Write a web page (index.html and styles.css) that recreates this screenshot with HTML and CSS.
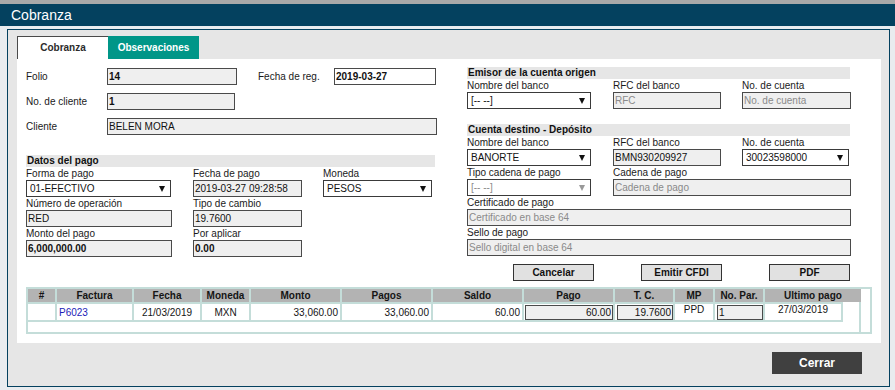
FILE: index.html
```html
<!DOCTYPE html>
<html lang="es">
  <head>
    <meta charset="UTF-8" />
    <meta name="viewport" content="width=device-width, initial-scale=1.0" />
    <title>Cobranza</title>
    <link rel="stylesheet" href="styles.css">
  </head>
  <body>
    <header class="topbar"><h1>Cobranza</h1></header>

    <div class="panel">
      <nav class="tabs">
        <span class="tab tab-on">Cobranza</span>
        <span class="tab tab-off">Observaciones</span>
      </nav>

      <section class="sheet">
        <div class="cols">
          <div class="col-left">
            <div class="row">
              <label class="row-lbl">Folio</label>
              <input class="inp w130 strong" value="14" readonly />
              <label class="reg-lbl">Fecha de reg.</label>
              <input class="inp inp-white w102 strong" value="2019-03-27" />
            </div>
            <div class="row">
              <label class="row-lbl">No. de cliente</label>
              <input class="inp w128 strong" value="1" readonly />
            </div>
            <div class="row">
              <label class="row-lbl">Cliente</label>
              <input class="inp w330" value="BELEN MORA" readonly />
            </div>

            <div class="bar bar-pago">Datos del pago</div>
            <div class="pay-grid">
              <div class="fld">
                <label>Forma de pago</label>
                <span class="sel w145"><select><option>01-EFECTIVO</option></select></span>
              </div>
              <div class="fld">
                <label>Fecha de pago</label>
                <input class="inp w109" value="2019-03-27 09:28:58" readonly />
              </div>
              <div class="fld">
                <label>Moneda</label>
                <span class="sel w109"><select><option>PESOS</option></select></span>
              </div>
              <div class="fld">
                <label>Número de operación</label>
                <input class="inp w146" value="RED" readonly />
              </div>
              <div class="fld">
                <label>Tipo de cambio</label>
                <input class="inp w109" value="19.7600" readonly />
              </div>
              <div class="fld"></div>
              <div class="fld">
                <label>Monto del pago</label>
                <input class="inp w146 strong" value="6,000,000.00" readonly />
              </div>
              <div class="fld">
                <label>Por aplicar</label>
                <input class="inp w109 strong" value="0.00" readonly />
              </div>
            </div>
          </div>

          <div class="col-right">
            <div class="bar">Emisor de la cuenta origen</div>
            <div class="bank-grid">
              <div class="fld">
                <label>Nombre del banco</label>
                <span class="sel w124"><select><option>[-- --]</option></select></span>
              </div>
              <div class="fld">
                <label>RFC del banco</label>
                <input class="inp w108" placeholder="RFC" readonly />
              </div>
              <div class="fld">
                <label>No. de cuenta</label>
                <input class="inp w109" placeholder="No. de cuenta" readonly />
              </div>
            </div>

            <div class="bar bar-destino">Cuenta destino - Depósito</div>
            <div class="bank-grid">
              <div class="fld">
                <label>Nombre del banco</label>
                <span class="sel w124"><select><option>BANORTE</option></select></span>
              </div>
              <div class="fld">
                <label>RFC del banco</label>
                <input class="inp w108" value="BMN930209927" readonly />
              </div>
              <div class="fld">
                <label>No. de cuenta</label>
                <span class="sel w107"><select><option>30023598000</option></select></span>
              </div>
              <div class="fld">
                <label>Tipo cadena de pago</label>
                <span class="sel sel-off w124"><select disabled><option>[-- --]</option></select></span>
              </div>
              <div class="fld span2">
                <label>Cadena de pago</label>
                <input class="inp wfull" placeholder="Cadena de pago" readonly />
              </div>
              <div class="fld span3">
                <label>Certificado de pago</label>
                <input class="inp wfull" placeholder="Certificado en base 64" readonly />
              </div>
              <div class="fld span3">
                <label>Sello de pago</label>
                <input class="inp wfull" placeholder="Sello digital en base 64" readonly />
              </div>
            </div>

            <div class="actions">
              <button class="btn">Cancelar</button>
              <button class="btn">Emitir CFDI</button>
              <button class="btn">PDF</button>
            </div>
          </div>
        </div>

        <div class="grid-box">
          <table class="grid grid-head">
            <colgroup>
              <col class="c1"><col class="c2"><col class="c3"><col class="c4">
              <col class="c5"><col class="c6"><col class="c7"><col class="c8">
              <col class="c9"><col class="c10"><col class="c11"><col class="c12">
            </colgroup>
            <tr>
              <th>#</th><th>Factura</th><th>Fecha</th><th>Moneda</th>
              <th>Monto</th><th>Pagos</th><th>Saldo</th><th>Pago</th>
              <th>T. C.</th><th>MP</th><th>No. Par.</th><th>Ultimo pago</th>
            </tr>
          </table>
          <div class="grid-body">
            <table class="grid grid-rows">
              <colgroup>
                <col class="c1"><col class="c2"><col class="c3"><col class="c4">
                <col class="c5"><col class="c6"><col class="c7"><col class="c8">
                <col class="c9"><col class="c10"><col class="c11"><col class="c12b">
              </colgroup>
              <tr>
                <td></td>
                <td class="left"><a href="#" class="doc">P6023</a></td>
                <td class="mid">21/03/2019</td>
                <td class="mid">MXN</td>
                <td class="num">33,060.00</td>
                <td class="num">33,060.00</td>
                <td class="num">60.00</td>
                <td class="box"><input class="cell-inp" value="60.00" /></td>
                <td class="box box-tc"><input class="cell-inp" value="19.7600" /></td>
                <td class="mid up">PPD</td>
                <td class="box box-tc"><input class="cell-inp cell-left" value="1" /></td>
                <td class="mid up">27/03/2019</td>
              </tr>
            </table>
          </div>
        </div>
      </section>

      <div class="footer">
        <button class="btn-close">Cerrar</button>
      </div>
    </div>
  </body>
</html>
```

FILE: styles.css
```css
* {
  box-sizing: border-box;
}

body {
  margin: 0;
  background: #e9ecef;
  font-family: "Liberation Sans", Arial, sans-serif;
  font-size: 10px;
  color: #1a1a1a;
}

.topbar {
  height: 26px;
  border-top: 4px solid #a9a9a9;
  background: #04415f;
}

.topbar h1 {
  margin: 0;
  padding-left: 11px;
  font-size: 14px;
  font-weight: normal;
  line-height: 22px;
  color: #fff;
}

.panel {
  margin: 3px 5px 0 7px;
  padding: 6px 8px 12px 9px;
  border: 1px solid #04415f;
  background: #e6e6e6;
}

/* tabs */
.tabs {
  display: flex;
}

.tab {
  width: 91px;
  height: 23px;
  line-height: 23px;
  text-align: center;
  font-weight: bold;
}

.tab-on {
  background: #fff;
  color: #2b2b2b;
  border-top: 1px solid #4a4a4a;
  border-left: 1px solid #4a4a4a;
  line-height: 22px;
}

.tab-off {
  background: #009688;
  color: #fff;
}

.sheet {
  background: #fff;
  padding: 8px 9px 9px 9px;
}

.cols {
  display: flex;
}

.col-left {
  width: 441px;
  padding: 1px 30px 0 0;
}

.col-right {
  width: 384px;
}

/* top rows */
.row {
  display: flex;
  align-items: center;
  height: 17px;
  margin-bottom: 8px;
}

.row-lbl {
  width: 81px;
}

.reg-lbl {
  width: 76px;
  margin-left: 21px;
}

.bar {
  height: 12px;
  line-height: 12px;
  padding-left: 1px;
  background: #e6e6e6;
  font-weight: bold;
  color: #111;
  width: 383px;
}

.bar-pago {
  width: 409px;
  margin-top: 20px;
}

.bar-destino {
  margin-top: 15px;
}

.fld label {
  display: block;
  height: 13px;
  line-height: 13px;
}

.pay-grid {
  display: grid;
  grid-template-columns: 167px 130px 1fr;
}

.bank-grid {
  display: grid;
  grid-template-columns: 146px 129px 1fr;
}

.span2 {
  grid-column: span 2;
}

.span3 {
  grid-column: span 3;
}

/* controls */
.inp {
  display: block;
  height: 17px;
  margin: 0;
  padding: 0 1px;
  border: 1px solid #4a4a4a;
  border-radius: 0;
  background: #efefef;
  font-family: inherit;
  font-size: 10px;
  color: #111;
  outline: none;
}

.inp::placeholder {
  color: #8a8a8a;
}

.inp-white {
  background: #fff;
}

.strong {
  font-weight: bold;
}

.sel {
  position: relative;
  display: block;
  height: 17px;
}

.sel select {
  appearance: none;
  width: 100%;
  height: 17px;
  margin: 0;
  padding: 0 3px;
  border: 1px solid #3a3a3a;
  border-radius: 0;
  background: #fff;
  font-family: inherit;
  font-size: 10px;
  color: #111;
}

.sel::after {
  content: "";
  position: absolute;
  right: 6px;
  top: 6px;
  border-left: 3px solid transparent;
  border-right: 3px solid transparent;
  border-top: 6px solid #111;
}

.sel-off select {
  color: #8a8a8a;
  opacity: 1;
}

.sel-off::after {
  border-top-color: #999;
}

.w102 { width: 102px; }
.w107 { width: 107px; }
.w108 { width: 108px; }
.w109 { width: 109px; }
.w124 { width: 124px; }
.w128 { width: 128px; }
.w130 { width: 130px; }
.w145 { width: 145px; }
.w146 { width: 146px; }
.w330 { width: 330px; }
.wfull { width: 100%; }

.actions {
  display: flex;
  gap: 47px;
  margin-top: 8px;
  padding-left: 46px;
}

.btn {
  width: 81px;
  height: 17px;
  padding: 0;
  border: 1px solid #333;
  background: #e1e1e1;
  font-family: inherit;
  font-size: 10px;
  font-weight: bold;
  color: #111;
}

/* invoices table */
.grid-box {
  width: 846px;
  margin-top: 6px;
  border: 2px solid #c4ddd9;
}

.grid {
  table-layout: fixed;
  border-collapse: separate;
  border-spacing: 0;
}

.grid-head {
  width: 833px;
}

.grid-head th {
  height: 13px;
  padding: 0;
  background: #b3b3b3;
  border-left: 2px solid #c4ddd9;
  font-size: 10px;
  font-weight: bold;
  color: #151515;
  line-height: 13px;
}

.grid-head th:first-child {
  border-left: 0;
}

.grid-body {
  width: 833px;
  height: 30px;
  border-right: 2px solid #c4ddd9;
}

.grid-rows {
  width: 815px;
  border-top: 2px solid #c4ddd9;
}

.grid-rows td {
  height: 17px;
  padding: 0 2px;
  border-left: 2px solid #c4ddd9;
  border-bottom: 2px solid #c4ddd9;
  white-space: nowrap;
  color: #151515;
}

.grid-rows td:first-child {
  border-left: 0;
}

.grid-rows td:last-child {
  border-right: 2px solid #c4ddd9;
}

.c1 { width: 27px; }
.c2 { width: 77px; }
.c3 { width: 68px; }
.c4 { width: 49px; }
.c5 { width: 91px; }
.c6 { width: 91px; }
.c7 { width: 91px; }
.c8 { width: 91px; }
.c9 { width: 60px; }
.c10 { width: 40px; }
.c11 { width: 50px; }
.c12 { width: 98px; }
.c12b { width: 80px; }

.left { text-align: left; }
.mid { text-align: center; }
.num { text-align: right; }

.up {
  vertical-align: top;
  padding-top: 1px;
}

.doc {
  color: #1c1cb8;
  text-decoration: none;
}

.grid-rows td.box {
  padding: 1px 0 0 1px;
}

.grid-rows td.box-tc {
  padding-left: 2px;
}

.cell-inp {
  display: block;
  width: 100%;
  height: 15px;
  margin: 0;
  padding: 0 1px;
  border: 1px solid #4a4a4a;
  background: #efefef;
  font-family: inherit;
  font-size: 10px;
  color: #111;
  text-align: right;
}

.cell-left {
  text-align: left;
}

.footer {
  display: flex;
  justify-content: flex-end;
  padding: 9px 19px 0 0;
}

.btn-close {
  width: 90px;
  height: 22px;
  border: 0;
  background: #404040;
  color: #fff;
  font-family: inherit;
  font-size: 12px;
  font-weight: bold;
}
```
